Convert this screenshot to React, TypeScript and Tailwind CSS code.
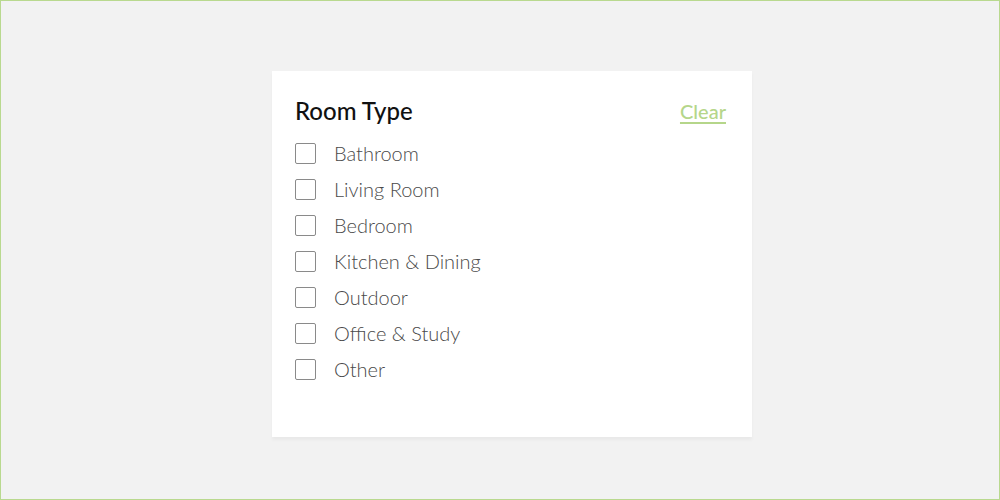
import React from "react";

const rooms = [
  "Bathroom",
  "Living Room",
  "Bedroom",
  "Kitchen & Dining",
  "Outdoor",
  "Office & Study",
  "Other",
];

export default function App() {
  return (
    <div
      className="w-[1000px] h-[500px] border border-[#b9d98f] bg-[#f2f2f2] flex pl-[271px] pt-[70px]"
      style={{ fontFamily: "Lato, 'Open Sans', sans-serif" }}
    >
      <div className="w-[480px] h-[366px] bg-white shadow-[0_3px_3px_rgba(0,0,0,0.04)] pl-[23px] pr-6 pt-[26px]">
        <div className="flex justify-between items-center h-[28px]">
          <h3 className="text-[24px] font-medium text-[#111] leading-none">
            Room Type
          </h3>
          <button className="text-[20px] font-medium text-[#b5d68a] underline underline-offset-[3px] leading-none pr-[2px]">
            Clear
          </button>
        </div>
        <div className="flex flex-col mt-[10px]">
          {rooms.map((r) => (
            <label key={r} className="flex items-center h-[36px] cursor-pointer">
              <span className="w-[21px] h-[21px] border border-[#8a8a8a] rounded-[2px] bg-white shrink-0" />
              <span className="ml-[18px] text-[20px] font-light text-[#4a4a4a] leading-none">
                {r}
              </span>
            </label>
          ))}
        </div>
      </div>
    </div>
  );
}
